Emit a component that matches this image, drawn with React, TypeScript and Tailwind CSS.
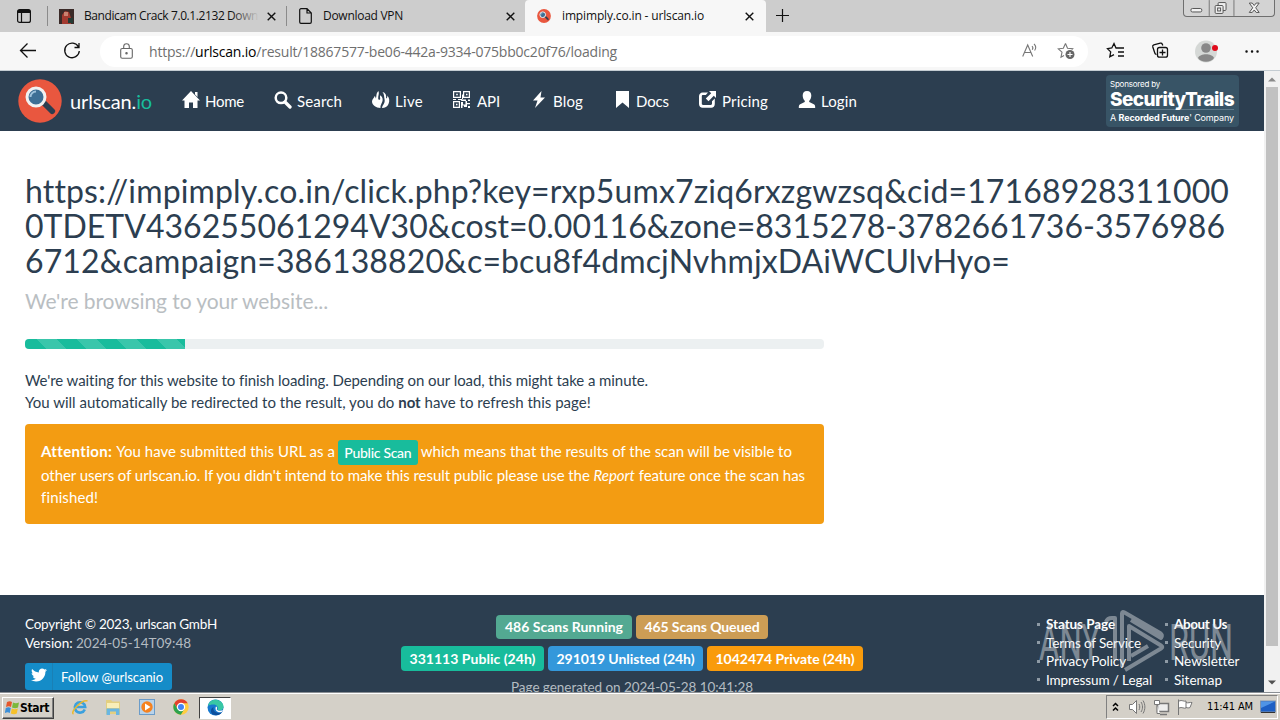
import { useLayoutEffect, useRef, type ReactNode } from 'react'
import { FaTwitter } from 'react-icons/fa'

interface FitProps {
  w: number
  className?: string
  children: ReactNode
}

// One line of text, spaced out so that it fills exactly `w` pixels.
function Fit({ w, className = '', children }: FitProps) {
  const ref = useRef<HTMLSpanElement>(null)
  useLayoutEffect(() => {
    const el = ref.current
    if (!el) return
    el.style.letterSpacing = '0px'
    const count = (el.textContent ?? '').length
    if (count > 1) {
      el.style.letterSpacing = `${(w - el.getBoundingClientRect().width) / count}px`
    }
  }, [w, children])
  return (
    <span ref={ref} className={`inline-block whitespace-pre ${className}`}>
      {children}
    </span>
  )
}

function LogoIcon({ size }: { size: number }) {
  return (
    <svg width={size} height={size} viewBox="0 0 44 44" className="shrink-0">
      <circle cx="22" cy="22" r="21.700" fill="#e9573f" />
      <path d="M24 25l3-3 9 9c1.500 1.500-1.500 4.500-3 3z" fill="#2c3e50" stroke="#2c3e50" strokeWidth="1.500" />
      <circle cx="18" cy="18" r="9" fill="#3d6f95" stroke="#f1f1f1" strokeWidth="3" />
      <path d="M12.500 18a5.500 5.500 0 0 1 5.500-5.500" fill="none" stroke="#9fc3dc" strokeWidth="2" />
    </svg>
  )
}

function TabStrip() {
  return (
    <div className="flex h-8 bg-[#cdcdcd] text-[12px] text-[#111]">
      <div className="flex w-[47px] items-center pl-[17px]">
        <svg width="14" height="14" viewBox="0 0 14 14" fill="none" stroke="#111">
          <rect x=".6" y=".6" width="12.800" height="12.800" rx="2" strokeWidth="1.200" />
          <path d="M1 2.500h12" strokeWidth="3" />
          <path d="M4.500 3v10" strokeWidth="1.200" />
        </svg>
      </div>
      <div className="flex w-[239px] items-center">
        <div className="mr-[11px] h-5 w-px bg-[#8b8b8b]" />
        <svg width="15" height="15" viewBox="0 0 15 15">
          <rect width="15" height="15" fill="#3a2a28" />
          <path d="M3 15V6l3-4 4 1 2 6v6z" fill="#a33a30" />
          <path d="M5 3h4v4H5z" fill="#c98270" />
          <path d="M9 9h5v5H9z" fill="#243a34" />
        </svg>
        <div className="relative ml-[10px] w-[175px] overflow-hidden">
          <Fit w={174}>Bandicam Crack 7.0.1.2132 Down</Fit>
          <div className="absolute inset-y-0 right-0 w-7 bg-gradient-to-r from-transparent to-[#cdcdcd]" />
        </div>
        <CloseIcon className="ml-[8px]" />
      </div>
      <div className="flex w-[239px] items-center">
        <div className="mr-[12px] h-5 w-px bg-[#8b8b8b]" />
        <svg width="13" height="16" viewBox="0 0 13 16" fill="none" stroke="#111" strokeWidth="1.200">
          <path d="M2 .7h6l4.300 4.300v9a1.300 1.300 0 0 1-1.300 1.300H2A1.300 1.300 0 0 1 .7 14V2A1.300 1.300 0 0 1 2 .7zM8 .7V5h4.300" />
        </svg>
        <Fit w={80} className="ml-[11px]">Download VPN</Fit>
        <CloseIcon className="ml-[103px]" />
      </div>
      <div className="flex w-[241px] items-center rounded-t bg-[#f7f7f7] pl-3">
        <LogoIcon size={14} />
        <Fit w={142} className="ml-[11px]">impimply.co.in - urlscan.io</Fit>
        <CloseIcon className="ml-[41px]" />
      </div>
      <svg width="32" height="32" viewBox="0 0 32 32" stroke="#111" strokeWidth="1.200">
        <path d="M10 15.500h13M16.500 9v13" />
      </svg>
      <div className="ml-auto mr-[5px] flex h-[17px] w-[92px] rounded-b border border-t-0 border-[#6f6f6f] bg-[#d3d3d3]">
        <svg width="91" height="16" viewBox="0 0 91 16" fill="none" stroke="#555">
          <path d="M25.500 0v16M50.500 0v16" stroke="#777" />
          <rect x="7" y="8.500" width="11" height="3.500" rx="1.500" fill="#f2f2f2" />
          <rect x="34.500" y="2.500" width="8" height="8" rx="1" fill="#eee" />
          <rect x="31.500" y="5.500" width="8" height="8" rx="1" fill="#eee" />
          <rect x="34" y="8" width="3" height="3" />
          <path d="M66 3h3l2 2.500L73 3h3l-3.500 4.800L76 12.500h-3l-2-2.500-2 2.500h-3l3.500-4.700z" fill="#f2f2f2" />
        </svg>
      </div>
    </div>
  )
}

function CloseIcon({ className }: { className: string }) {
  return (
    <svg width="9" height="9" viewBox="0 0 9 9" stroke="#111" strokeWidth="1.400" className={className}>
      <path d="M.7.7l7.600 7.600M8.300.7L.7 8.300" />
    </svg>
  )
}

function Toolbar() {
  return (
    <div className="flex h-[39px] items-center border-b border-[#c4ccd2] bg-[#f7f7f7]">
      <svg width="100" height="38" viewBox="0 0 100 38" fill="none" stroke="#111" strokeWidth="1.300">
        <path d="M36 18.500H20.500M27.500 11.500l-7 7 7 7" />
        <path d="M78.500 15a7.300 7.300 0 1 0 .8 4M79 11v4.500h-4.500" />
      </svg>
      <div className="flex h-[31px] w-[988px] items-center rounded-full bg-white text-[14px] text-[#6f6f6f]">
        <svg width="13" height="16" viewBox="0 0 13 16" fill="none" stroke="#666" strokeWidth="1.100" className="ml-5">
          <rect x=".7" y="5.500" width="11.600" height="9.700" rx="1.500" />
          <path d="M3.700 5.500V3.500a2.800 2.800 0 0 1 5.600 0v2" />
          <circle cx="6.500" cy="10.300" r=".7" fill="#666" />
        </svg>
        <Fit w={468} className="ml-4">
          https://<span className="text-black">urlscan.io</span>/result/18867577-be06-442a-9334-075bb0c20f76/loading
        </Fit>
        <svg width="54" height="20" viewBox="0 0 54 20" fill="none" stroke="#777" strokeWidth="1.100" className="ml-auto mr-[12px]">
          <path d="M.7 15.500L5.700 4l5 11.500M2.500 11.500h6.400M10 5.200c1 .9 1 2.400.3 3.500M12 3c2 1.800 2 4.500.6 6.500" />
          <path d="M43.500 2.500l2 4.700 5.200.5-1 1M43.500 2.500l-2.200 4.700-5 .6 3.700 3.400-1 5 3-1.700" />
          <circle cx="48" cy="13.500" r="4.500" fill="#666" stroke="none" />
          <path d="M48 11v5M45.500 13.500h5" stroke="#fff" />
        </svg>
      </div>
      <svg width="192" height="38" viewBox="1088 0 192 38" fill="none" stroke="#111" strokeWidth="1.300">
        <path d="M1117.500 16h-1.500l-2-4.500-2.200 4.500-4.300.7 3.200 3.200-.9 5 4.200-2.200M1117.500 16h6.500M1118 20h6M1118 24h6" />
        <path d="M1156.500 22.500c-1-.3-1.500-.8-1.700-1.500l-2-6c-.3-1 .2-1.800 1-2.100l6.500-1.700c.9-.2 1.700.2 2 1l.5 1.300" />
        <rect x="1157.500" y="15.500" width="10" height="9.700" rx="2" />
        <path d="M1162.500 17.500v6M1159.500 20.500h6" />
        <circle cx="1206" cy="19.500" r="11" fill="#d5d8d6" stroke="none" />
        <circle cx="1206" cy="16" r="4.800" fill="#888" stroke="none" />
        <path d="M1198 26c2-5 14-5 16 0-3 5-13 5-16 0z" fill="#888" stroke="none" />
        <circle cx="1215" cy="16" r="3" fill="#e00b1c" stroke="none" />
        <path d="M1246.500 19.500h.1M1252 19.500h.1M1257.500 19.500h.1" strokeWidth="2.400" strokeLinecap="round" />
      </svg>
    </div>
  )
}

const navItems = [
  {
    label: 'Home',
    itemWidth: 'w-[62px]',
    w: 39,
    icon: <path d="M9 0l9 9.500h-2.500V17H11v-5.500H7V17H2.500V9.500H0zM13 1h2.500v5L13 3.500z" />,
  },
  {
    label: 'Search',
    itemWidth: 'w-[68px]',
    w: 45,
    icon: (
      <g fill="none" stroke="#fff">
        <circle cx="7" cy="6.800" r="5.300" strokeWidth="2.500" />
        <path d="M11 11l5 5" strokeWidth="3.300" strokeLinecap="round" />
      </g>
    ),
  },
  {
    label: 'Live',
    itemWidth: 'w-[51px]',
    w: 28,
    icon: (
      <path d="M6.500 0C7.500 3 6 4.500 6.200 7.500c.1 1.800 2 2 2 .3 0-1.300-.5-2 .1-3.500C11.500 7 11 10 9.500 12.500 8.800 14 8.200 15.500 8.500 17 4 17 0 14 0 10.500 0 8 2 7.500 2.700 5c.8.8 1 1.600 1 2.600C5 5.500 3.500 2.500 6.500 0zM10.500 1c3 .8 4.200 3 3.500 6.500 1.300-.3 1.500-1.700 1.300-3C17.500 7 17.800 10 16.500 13c-1 2.500-3.500 4-6.500 4 0-2 1.500-3 2-4.500.7-1.500.9-3 .5-4.500C12 6 12.500 3.500 10.500 1z" />
    ),
  },
  {
    label: 'API',
    itemWidth: 'w-[47px]',
    w: 23,
    icon: (
      <path
        fillRule="evenodd"
        d="M0 0h8v7H0zM1.200 1.200v4.600h5.600V1.200zM3.200 2.700h1.600v1.600H3.200zM10 0h7v7h-7zM11.200 1.200v4.600h4.600V1.200zM13 2.700h1.500v1.500H13zM0 10h7v7H0zM1.200 11.200v4.600h4.600v-4.600zM3 12.800h1.500v1.500H3zM0 8h3v1H0zM5 8h5V3.500h-1V8.500h4v1.500H8.200v-1H5zM8 11h2v2.500h2.500V10H14v2h3v1.300h-3V16h-3v-1.500H9.500V17H8zM15 8.500h2V10h-2zM15 15h2v2h-2z"
      />
    ),
  },
  {
    label: 'Blog',
    itemWidth: 'w-[53px]',
    w: 30,
    icon: <path d="M11.500 0L3 9.500h4.500L5 17l10-10.500h-4.500z" />,
  },
  {
    label: 'Docs',
    itemWidth: 'w-[56px]',
    w: 33,
    icon: <path d="M3 0h13v17l-6.500-5.500L3 17z" />,
  },
  {
    label: 'Pricing',
    itemWidth: 'w-[69px]',
    w: 46,
    icon: (
      <path d="M10 0h7v7l-2.200-2.200-5.300 5.400L6.800 7.500l5.400-5.300zM3.500 1.500H9L6.800 4H4c-.7 0-1.200.5-1.200 1.200v7.600c0 .7.500 1.200 1.200 1.200h7.800c.7 0 1.200-.5 1.200-1.200v-2.600l2.800-2.700V13c0 2-1.500 3.800-3.500 3.800H3.500C1.500 16.800 0 15 0 13V5.300c0-2 1.500-3.800 3.500-3.800z" />
    ),
  },
  {
    label: 'Login',
    itemWidth: 'w-[59px]',
    w: 36,
    icon: (
      <path d="M9 0c3 0 4.300 2 4.300 4.500 0 2-.8 4.200-2 5.300-.5 1 .2 1.400 1 1.800l3.500 1.600c1.200.6 1.400 1.500 1.400 3.800H.8c0-2.300.2-3.200 1.400-3.800l3.500-1.600c.8-.4 1.500-.8 1-1.800-1.200-1.100-2-3.300-2-5.300C4.700 2 6 0 9 0z" />
    ),
  },
]

function NavBar() {
  return (
    <nav className="flex h-[60px] shrink-0 items-center bg-[#2c3e50] pl-[18px] pr-[25px] text-[15px] text-white">
      <LogoIcon size={44} />
      <Fit w={82} className="ml-2 text-[20px]">
        urlscan.<span className="text-[#18bc9c]">io</span>
      </Fit>
      <div className="ml-[30px] flex gap-[30px]">
        {navItems.map((item) => (
          <div key={item.label} className={`${item.itemWidth} flex items-center justify-between`}>
            <svg width="18" height="18" viewBox="0 0 18 18" fill="#fff" className="-mt-[3px] shrink-0">
              {item.icon}
            </svg>
            <Fit w={item.w}>{item.label}</Fit>
          </div>
        ))}
      </div>
      <div className="ml-auto h-[52px] w-[133px] rounded bg-[#385466] pl-1 pt-[3px] font-[Inter]">
        <div className="h-3 text-[8px] leading-3">
          <Fit w={50}>Sponsored by</Fit>
        </div>
        <div className="flex h-[20px] w-[124px] border-b border-[#5d7888] text-[19px] leading-[19px] font-extrabold">
          <Fit w={124}>SecurityTrails</Fit>
        </div>
        <div className="h-3 text-[9px] leading-[15px]">
          <Fit w={124}>
            A <b>Recorded Future</b>' Company
          </Fit>
        </div>
      </div>
    </nav>
  )
}

const headingLines = [
  { text: 'https://impimply.co.in/click.php?key=rxp5umx7ziq6rxzgwzsq&cid=17168928311000', w: 1203 },
  { text: '0TDETV436255061294V30&cost=0.00116&zone=8315278-3782661736-3576986', w: 1200 },
  { text: '6712&campaign=386138820&c=bcu8f4dmcjNvhmjxDAiWCUlvHyo=', w: 985 },
]

function Content() {
  return (
    <main className="h-[464px] shrink-0 bg-white px-[25px] pt-[42px] text-[15px] text-[#2c3e50]">
      <h1 className="text-[32px] leading-[35px]">
        {headingLines.map((line) => (
          <div key={line.text} className="h-[35px]">
            <Fit w={line.w}>{line.text}</Fit>
          </div>
        ))}
      </h1>
      <div className="mt-[11px] h-[36px] text-[21px] leading-[24px] text-[#b9bec2]">
        <Fit w={303}>We're browsing to your website...</Fit>
      </div>
      <div className="mt-[14px] h-[10px] w-[799px] overflow-hidden rounded bg-[#ecf0f1]">
        <div className="h-full w-[160px] bg-[#18bc9c] bg-[linear-gradient(45deg,rgba(255,255,255,.15)_25%,transparent_25%,transparent_50%,rgba(255,255,255,.15)_50%,rgba(255,255,255,.15)_75%,transparent_75%,transparent)] bg-[length:40px_40px] bg-[position:12px_0px]" />
      </div>
      <div className="mt-[20px] leading-[22px]">
        <div className="h-[22px]">
          <Fit w={623}>We're waiting for this website to finish loading. Depending on our load, this might take a minute.</Fit>
        </div>
        <div className="h-[22px]">
          <Fit w={566}>
            You will automatically be redirected to the result, you do <b>not</b> have to refresh this page!
          </Fit>
        </div>
      </div>
      <div className="mt-[11px] h-[100px] w-[799px] rounded bg-[#f39c12] px-4 pt-4 leading-[22px] text-white">
        <div className="flex h-6 items-start">
          <Fit w={75} className="font-bold">Attention: </Fit>
          <Fit w={218}>You have submitted this URL as a</Fit>
          <span className="ml-[3px] flex h-[25px] w-[80px] items-center justify-center rounded-[3px] bg-[#18bc9c] text-[14px] font-medium">
            <Fit w={67}>Public Scan</Fit>
          </span>
          <Fit w={371} className="ml-[3px]">which means that the results of the scan will be visible to</Fit>
        </div>
        <div className="h-[22px]">
          <Fit w={764}>
            other users of urlscan.io. If you didn't intend to make this result public please use the <i>Report</i> feature once the
            scan has
          </Fit>
        </div>
        <div className="h-[22px]">
          <Fit w={57}>finished!</Fit>
        </div>
      </div>
    </main>
  )
}

const footerLinks = [
  [
    { label: 'Status Page', w: 69, strong: true },
    { label: 'Terms of Service', w: 95, strong: false },
    { label: 'Privacy Policy', w: 80, strong: false },
    { label: 'Impressum / Legal', w: 106, strong: false },
  ],
  [
    { label: 'About Us', w: 53, strong: true },
    { label: 'Security', w: 47, strong: false },
    { label: 'Newsletter', w: 65, strong: false },
    { label: 'Sitemap', w: 48, strong: false },
  ],
]

function ScanBadge({ className, w, children }: FitProps) {
  return (
    <span className={`flex items-center justify-center rounded pb-px text-[14px] font-bold ${className}`}>
      <Fit w={w}>{children}</Fit>
    </span>
  )
}

function Footer() {
  return (
    <footer className="relative flex h-[97px] shrink-0 justify-between overflow-hidden bg-[#2c3e50] pl-[25px] pr-[25px] text-[13.5px] text-white">
      <div className="w-[376px] pt-5 leading-[19px]">
        <div className="h-[19px]">
          <Fit w={192}>Copyright © 2023, urlscan GmbH</Fit>
        </div>
        <div className="h-[19px]">
          <Fit w={166}>
            Version: <span className="text-[#b4bcc2]">2024-05-14T09:48</span>
          </Fit>
        </div>
        <div className="mt-[10px] flex h-[27px] w-[147px] items-center rounded-[3px] bg-[#158cc8]">
          <div className="flex h-full w-7 items-center justify-center border-r border-[#1a80b5] pb-1">
            <FaTwitter size={16} />
          </div>
          <Fit w={102} className="ml-2 mt-0.5 text-[13px]">Follow @urlscanio</Fit>
        </div>
      </div>
      <div className="flex w-[462px] flex-col items-center pt-5">
        <div className="flex gap-1">
          <ScanBadge w={118} className="h-6 w-[136px] bg-[#53a992]">486 Scans Running</ScanBadge>
          <ScanBadge w={115} className="h-6 w-[132px] bg-[#cd9d55]">465 Scans Queued</ScanBadge>
        </div>
        <div className="mt-[7px] flex gap-1">
          <ScanBadge w={126} className="h-[25px] w-[143px] bg-[#18bc9c]">331113 Public (24h)</ScanBadge>
          <ScanBadge w={138} className="h-[25px] w-[155px] bg-[#3498db]">291019 Unlisted (24h)</ScanBadge>
          <ScanBadge w={139} className="h-[25px] w-[156px] bg-[#f99b0c]">1042474 Private (24h)</ScanBadge>
        </div>
        <div className="mt-[6px] h-5 leading-5 text-[#b4bcc2]">
          <Fit w={242}>Page generated on 2024-05-28 10:41:28</Fit>
        </div>
      </div>
      <div className="flex w-[376px] justify-end pt-5">
        {footerLinks.map((column, i) => (
          <ul key={i} className={i === 0 ? 'w-[128px]' : 'w-[74px]'}>
            {column.map((link) => (
              <li key={link.label} className="flex h-[18.500px] items-center">
                <span className="mr-[6px] size-[3px] shrink-0 bg-[#8e9aa5]" />
                <Fit w={link.w} className={link.strong ? 'font-bold' : ''}>{link.label}</Fit>
              </li>
            ))}
          </ul>
        ))}
      </div>
      <svg width="200" height="70" viewBox="1036 605 200 70" className="absolute right-[28px] top-[10px] opacity-45">
        <g fill="#dfe3e6" fontFamily="Roboto" fontSize="50">
          <text x="1039" y="660" textLength="61" lengthAdjust="spacingAndGlyphs">ANY</text>
          <text x="1169" y="660" textLength="64" lengthAdjust="spacingAndGlyphs">RUN</text>
        </g>
        <g fill="none" stroke="#dfe3e6" strokeWidth="4" strokeLinejoin="round">
          <path d="M1106 622c1-3 3-4 6-4h3V660" />
          <path d="M1122 667V613.500q0-2.500 2.500-1L1160 633q3 2 1 5L1131 620" />
          <path d="M1129 661V626L1161 645.500q2.500 1.500 0 3L1125 670M1131 656L1148 646" />
        </g>
      </svg>
    </footer>
  )
}

function ScrollBar() {
  return (
    <div className="flex w-4 flex-col items-center bg-[#f1f1f1]">
      <svg width="16" height="16" viewBox="0 0 16 16" fill="#8a8a8a">
        <path d="M4 10.500h8L8 6.500z" />
      </svg>
      <div className="h-[559px] w-3 bg-[#c1c1c1]" />
      <svg width="16" height="16" viewBox="0 0 16 16" fill="#505050" className="mt-auto">
        <path d="M4 4.500h8l-4 4z" />
      </svg>
    </div>
  )
}

function TaskBar() {
  return (
    <div className="flex h-7 items-center border-t border-[#8a8f94] bg-[#d4d0c8] font-[DejaVu_Sans_Condensed] shadow-[inset_0_1px_0_#fff]">
      <div className="ml-[2px] mt-[2px] flex h-[22px] w-[52px] items-center border border-b-[#404040] border-l-white border-r-[#404040] border-t-white pl-[2px] text-[12px] font-bold text-black shadow-[inset_-1px_-1px_0_#808080]">
        <svg width="15" height="15" viewBox="0 0 15 15" className="shrink-0">
          <path d="M2 2c2-1 3.500-1 5 0L6 7c-1.500-1-3-1-5 0z" fill="#e5572b" />
          <path d="M8 2.500c2 1 3.500 1 6 0L13 7.500c-2 1-4 .8-6 0z" fill="#7cb83c" />
          <path d="M.8 8c2-1 3.500-.8 5 0l-1 5c-1.500-1-3-1-5 0z" fill="#3c8fd8" />
          <path d="M6.800 8.500c2 1 4 1 6 0l-1 5c-2 1-4 .8-6 0z" fill="#f6c12b" />
        </svg>
        <Fit w={29}>Start</Fit>
      </div>
      <svg width="130" height="24" viewBox="66 695 130 24" className="ml-3 mt-px shrink-0">
        <path d="M84.800 709.500a5.200 5.200 0 1 1 .4-2.500H76" fill="none" stroke="#3aa0de" strokeWidth="2.600" />
        <path d="M73.500 714c-4-2 9-15 14-13" fill="none" stroke="#eab92d" strokeWidth="1.500" />
        <path d="M106 700h5l1.500 1.500h7.500V714h-14z" fill="#e3cf80" />
        <path d="M107 703h12v5h-12z" fill="#f8eeb8" />
        <path d="M106.500 715v-6.500h13v6.500H116v-3.500h-6v3.500z" fill="#69b6e2" />
        <rect x="139.500" y="699.500" width="15" height="15" fill="#b9d3ea" stroke="#6b9cc9" />
        <circle cx="147" cy="707" r="5.700" fill="#f58220" />
        <path d="M145 703.500l5.500 3.500-5.500 3.500z" fill="#fff" />
        <circle cx="181" cy="707" r="7.700" fill="#ffcd40" />
        <path d="M174.300 703.200a7.700 7.700 0 0 1 13.400 0H181l-3.300 5.700z" fill="#e2402f" />
        <path d="M174.300 703.200a7.700 7.700 0 0 0 6.500 11.500l3.500-5.800h-6.700z" fill="#2da24e" />
        <circle cx="181" cy="707" r="3.600" fill="#4285f4" stroke="#fff" strokeWidth="1.200" />
      </svg>
      <div className="ml-[3px] mt-[2px] flex h-[22px] w-[32px] items-center justify-center border border-b-white border-l-[#404040] border-r-white border-t-[#404040] bg-white">
        <svg width="17" height="17" viewBox="0 0 17 17">
          <circle cx="8.500" cy="8.500" r="8" fill="#1678cf" />
          <path d="M1 7C2 1.500 7 0 10.500 1c4 1 6.500 4.500 6 7.500-.5 2.500-4 3.500-6 2.500 1.500-3-1-5.500-4-5.500C4 5.500 2 6 1 7z" fill="#38c7a4" />
          <path d="M6.500 8c-1 4 3 7.500 8.500 5-2 3.500-6 4-9 2.500-3-2-2.500-6 .5-7.500z" fill="#0c4f9c" />
          <path d="M9 7.500c1.500.5 1.300 2 .7 3 1.300 1.700 4.500 1.500 6.500.5l-1.500 2c-4 1.500-7.500-2-5.700-5.500z" fill="#fff" />
        </svg>
      </div>
      <div className="ml-auto mr-[2px] mt-px flex h-[24px] w-[172px] items-center border border-b-white border-l-[#808080] border-r-white border-t-[#808080] text-[11px] text-black">
        <svg width="100" height="22" viewBox="1107 696 100 22" fill="none" stroke="#777" className="shrink-0">
          <path d="M1113 706l2.500-2.500 2.500 2.500M1113 710.500l2.500-2.500 2.500 2.500" stroke="#000" strokeWidth="1.500" />
          <path d="M1129.500 704.500h3l4-4v13l-4-4h-3z" fill="#fff" />
          <path d="M1139 704c1 2 1 4 0 6M1141 702c2 3 2 7 0 10M1143 700.500c2.500 4 2.500 9 0 13" />
          <path d="M1157.500 703.500h11v8h-11zM1160 714.500h7" fill="#eee" strokeWidth="1.500" />
          <path d="M1154.500 700.500h5v4h-5zM1157 705v8.500h3" fill="#fff" />
          <path d="M1178.500 699.500V715M1179 701c3-1.500 5 1 7 0v7c-2 1-4-1.500-7 0M1186 702.500c2 1 4-.5 6 0l-2 5c-1 .5-2.500.5-4 0" fill="#fff" />
        </svg>
        <Fit w={46} className="mt-px">11:41 AM</Fit>
        <svg width="16" height="14" viewBox="0 0 16 14" className="ml-[7px]">
          <rect x=".5" y="1" width="15" height="11" fill="#1d5fc4" stroke="#7f93ad" />
          <path d="M1 1.500h14L1 8z" fill="#4f94e6" />
          <path d="M1 12.500h14" stroke="#333" />
        </svg>
      </div>
    </div>
  )
}

export default function App() {
  return (
    <div className="h-[720px] w-[1280px] overflow-hidden bg-white font-['Open_Sans',sans-serif]">
      <TabStrip />
      <Toolbar />
      <div className="flex h-[621px]">
        <div className="flex w-[1264px] flex-col overflow-hidden font-[Lato]">
          <NavBar />
          <Content />
          <Footer />
        </div>
        <ScrollBar />
      </div>
      <TaskBar />
    </div>
  )
}
